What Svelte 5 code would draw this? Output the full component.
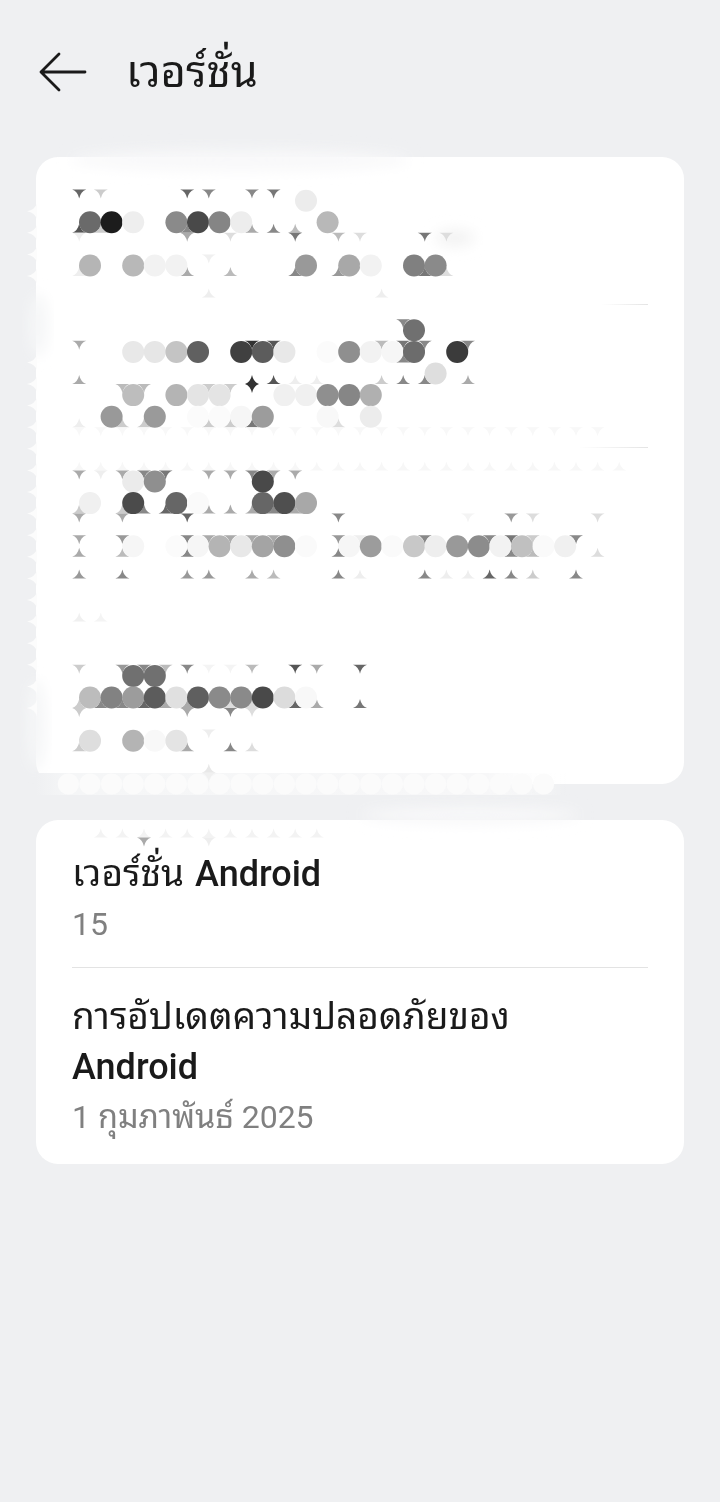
<script>
	// blurred-out block of the first card: grid of dots and the little corners between them
	const step = 21.6;
	const cx = (k) => 68.4 + step * k;
	const cy = (n) => 200.7 + step * n;
	const mx = (m) => 79.2 + step * m;
	const my = (j) => 189.6 + step * j;

	const dotRows = [
		[0, [[11, "ececec"]]],
		[1, [[1, "6a6a6a"], [2, "1f1f1f"], [3, "eeeeee"], [5, "8a8a8a"], [6, "4a4a4a"], [7, "858585"], [8, "ededed"], [12, "b8b8b8"]]],
		[3, [[1, "b5b5b5"], [3, "b8b8b8"], [4, "f2f2f2"], [5, "f2f2f2"], [11, "999999"], [13, "a8a8a8"], [14, "f2f2f2"], [16, "808080"], [17, "8a8a8a"]]],
		[6, [[16, "707070"]]],
		[7, [[3, "e8e8e8"], [4, "e6e6e6"], [5, "c4c4c4"], [6, "606060"], [8, "404040"], [9, "5c5c5c"], [10, "e8e8e8"], [12, "fbfbfb"], [13, "8f8f8f"], [14, "f2f2f2"], [15, "f6f6f6"], [16, "6c6c6c"], [18, "3a3a3a"]]],
		[8, [[17, "dedede"]]],
		[9, [[3, "bdbdbd"], [5, "b4b4b4"], [6, "e4e4e4"], [7, "e4e4e4"], [10, "f0f0f0"], [11, "f0f0f0"], [12, "8f8f8f"], [13, "868686"], [14, "b0b0b0"]]],
		[10, [[2, "999999"], [4, "9a9a9a"], [6, "fbfbfb"], [7, "fbfbfb"], [8, "f6f6f6"], [9, "9c9c9c"], [12, "f8f8f8"], [14, "ececec"]]],
		[13, [[3, "ebebeb"], [4, "8f8f8f"], [9, "4a4a4a"]]],
		[14, [[1, "f0f0f0"], [3, "4c4c4c"], [5, "666666"], [6, "fafafa"], [9, "666666"], [10, "505050"], [11, "a8a8a8"]]],
		[16, [[3, "f6f6f6"], [5, "fbfbfb"], [6, "f6f6f6"], [7, "b4b4b4"], [8, "e8e8e8"], [9, "a4a4a4"], [10, "8f8f8f"], [11, "fafafa"], [13, "f6f6f6"], [14, "9c9c9c"], [15, "fafafa"], [16, "c8c8c8"], [17, "eeeeee"], [18, "999999"], [19, "8c8c8c"], [20, "f2f2f2"], [21, "c0c0c0"], [22, "fafafa"], [23, "f0f0f0"]]],
		[22, [[3, "707070"], [4, "707070"]]],
		[23, [[1, "bcbcbc"], [2, "828282"], [3, "9c9c9c"], [4, "5c5c5c"], [5, "e0e0e0"], [6, "5e5e5e"], [7, "8a8a8a"], [8, "8a8a8a"], [9, "4a4a4a"], [10, "dcdcdc"], [11, "f8f8f8"]]],
		[25, [[1, "dedede"], [3, "b4b4b4"], [4, "f8f8f8"], [5, "e4e4e4"]]],
	];

	const faint = (from, to, grey) =>
		Array.from({ length: to - from + 1 }, (_, i) => [from + i, grey]);

	// [row line, 1 = points down / -1 = points up, [[column, grey]]]
	const cornerRows = [
		[0, 1, [[0, "666666"], [1, "cccccc"], [5, "666666"], [6, "888888"], [8, "888888"], [9, "777777"]]],
		[2, -1, [[0, "555555"], [1, "cccccc"], [5, "888888"], [8, "aaaaaa"], [9, "888888"], [10, "bbbbbb"]]],
		[2, 1, [[0, "eeeeee"], [5, "aaaaaa"], [7, "dddddd"], [10, "777777"], [12, "bbbbbb"], [13, "dddddd"], [16, "777777"], [17, "dddddd"]]],
		[3, 1, [[6, "f0f0f0"]]],
		[4, -1, [[0, "eeeeee"], [5, "aaaaaa"], [7, "bbbbbb"], [10, "888888"], [12, "999999"], [16, "777777"], [17, "dddddd"]]],
		[5, -1, [[6, "eeeeee"], [14, "eeeeee"]]],
		[6, 1, [[15, "888888"]]],
		[7, 1, [[0, "aaaaaa"], [8, "333333"], [9, "555555"], [14, "bbbbbb"], [15, "777777"], [16, "888888"], [18, "888888"]]],
		[8, -1, [[15, "888888"]]],
		[9, -1, [[0, "aaaaaa"], [8, "333333"], [9, "555555"], [10, "eeeeee"], [11, "eeeeee"], [14, "cccccc"], [15, "888888"], [16, "888888"], [18, "aaaaaa"]]],
		[9, 1, [[2, "bbbbbb"], [3, "bbbbbb"], [6, "cccccc"], [7, "cccccc"], [8, "333333"]]],
		[11, -1, [[0, "eeeeee"], [2, "cccccc"], [3, "cccccc"], [6, "cccccc"], [7, "cccccc"], [8, "777777"], [12, "dddddd"]]],
		[11, 1, faint(0, 24, "f8f8f8")],
		[13, -1, faint(0, 25, "f7f7f7")],
		[13, 1, [[0, "aaaaaa"], [1, "eeeeee"], [2, "aaaaaa"], [3, "888888"], [4, "777777"], [6, "aaaaaa"], [7, "aaaaaa"], [8, "888888"], [9, "aaaaaa"], [10, "aaaaaa"]]],
		[15, -1, [[0, "cccccc"], [2, "cccccc"], [3, "888888"], [4, "666666"], [6, "aaaaaa"], [7, "aaaaaa"], [8, "aaaaaa"], [9, "888888"], [10, "aaaaaa"]]],
		[15, 1, [[0, "aaaaaa"], [2, "aaaaaa"], [5, "666666"], [12, "888888"], [18, "f4f4f4"], [20, "999999"], [21, "dddddd"], [24, "dddddd"]]],
		[16, 1, [[0, "aaaaaa"], [2, "999999"], [5, "888888"], [6, "aaaaaa"], [7, "aaaaaa"], [8, "aaaaaa"], [9, "aaaaaa"], [12, "999999"], [13, "eeeeee"], [16, "888888"], [19, "888888"], [20, "777777"], [21, "cccccc"], [23, "888888"]]],
		[17, -1, [[0, "aaaaaa"], [2, "bbbbbb"], [5, "888888"], [12, "888888"], [20, "888888"], [21, "bbbbbb"], [24, "dddddd"]]],
		[18, -1, [[0, "999999"], [2, "888888"], [5, "999999"], [6, "999999"], [8, "aaaaaa"], [9, "bbbbbb"], [12, "888888"], [13, "eeeeee"], [16, "888888"], [17, "eeeeee"], [18, "eeeeee"], [19, "666666"], [20, "888888"], [21, "cccccc"], [23, "888888"]]],
		[20, -1, [[0, "f0f0f0"], [1, "f4f4f4"]]],
		[22, 1, [[0, "cccccc"], [2, "999999"], [3, "888888"], [4, "bbbbbb"], [5, "888888"], [6, "f4f4f4"], [7, "f4f4f4"], [8, "bbbbbb"], [10, "555555"], [11, "aaaaaa"], [13, "666666"]]],
		[24, -1, [[0, "cccccc"], [1, "888888"], [2, "888888"], [3, "666666"], [4, "aaaaaa"], [5, "aaaaaa"], [7, "dddddd"], [8, "dddddd"], [10, "666666"], [11, "aaaaaa"], [13, "777777"]]],
		[24, 1, [[0, "cccccc"], [5, "aaaaaa"], [7, "888888"], [8, "dddddd"]]],
		[25, 1, [[6, "eeeeee"]]],
		[26, -1, [[0, "cccccc"], [5, "aaaaaa"], [7, "888888"], [8, "dddddd"]]],
		[27, -1, [[6, "e8e8e8"]]],
		[27, 1, [[6, "f0f0f0"]]],
		[30, -1, faint(1, 11, "f3f3f3")],
		[30, 1, [[3, "aaaaaa"], [6, "eeeeee"]]],
	];

	const stripDots = Array.from({ length: 23 }, (_, i) => i);
	const edgeRows = [1, 2, 3, 4, 8, 9, 10, 11, 12, 13, 14, 15, 16, 17, 18, 19, 20, 21, 22, 23, 24];

	function corner(x, y, dir) {
		const tip = y + dir * 9;
		const bow = y + dir * 2;
		return `M${x - 7} ${y}Q${x - 1.5} ${bow} ${x} ${tip}Q${x + 1.5} ${bow} ${x + 7} ${y}Z`;
	}

	function spike(x, y) {
		return `M${x + 1} ${y - 8}Q${x - 1} ${y - 1.5} ${x - 9} ${y}Q${x - 1} ${y + 1.5} ${x + 1} ${y + 8}Z`;
	}
</script>

<div class="page">
	<header>
		<svg class="back" width="48" height="40" viewBox="0 0 48 40">
			<path d="M46 20H2M20 2 2 20l18 18" />
		</svg>
		<h1>เวอร์ชั่น</h1>
	</header>

	<section class="card first">
		<div class="slot one"></div>
		<div class="slot two"></div>
		<div class="slot three"></div>
	</section>

	<section class="card">
		<div class="item">
			<div class="label"><span class="th">เวอร์ชั่น</span> <b>Android</b></div>
			<div class="value">15</div>
		</div>
		<div class="item">
			<div class="label"><span class="th">การอัปเดตความปลอดภัยของ</span><br /><b>Android</b></div>
			<div class="value">1 <span class="th">กุมภาพันธ์</span> 2025</div>
		</div>
	</section>

	<svg class="smear" width="720" height="1502" viewBox="0 0 720 1502">
		<defs>
			<filter id="soft" x="-30%" y="-100%" width="160%" height="300%">
				<feGaussianBlur stdDeviation="7" />
			</filter>
			<filter id="grain" x="0" y="0" width="100%" height="100%">
				<feGaussianBlur stdDeviation="0.5" />
			</filter>
			<linearGradient id="strip" x1="0" x2="1" y1="0" y2="0">
				<stop offset="0" stop-color="#eff0f2" />
				<stop offset="0.06" stop-color="#f5f6f7" />
				<stop offset="0.85" stop-color="#f7f7f8" />
				<stop offset="1" stop-color="#ffffff" stop-opacity="0" />
			</linearGradient>
		</defs>

		<!-- soft patches round the edges -->
		<ellipse cx="240" cy="160" rx="170" ry="11" fill="#f8f8f9" filter="url(#soft)" />
		<ellipse cx="38" cy="325" rx="10" ry="32" fill="#f5f6f7" filter="url(#soft)" />
		<ellipse cx="36" cy="725" rx="10" ry="46" fill="#f5f6f7" filter="url(#soft)" />
		<ellipse cx="455" cy="238" rx="20" ry="8" fill="#f2f2f2" filter="url(#soft)" />
		<ellipse cx="470" cy="815" rx="110" ry="9" fill="#f8f8f9" filter="url(#soft)" />

		{#each edgeRows as j}
			<path d={spike(36, my(j))} fill="#fcfcfc" />
		{/each}

		<rect x="36" y="773" width="530" height="22" fill="url(#strip)" />
		{#each stripDots as k}
			<circle cx={cx(k)} cy="784" r="10.6" fill="#fbfbfb" />
		{/each}

		<g filter="url(#grain)">
			{#each cornerRows as [j, dir, list]}
				{#each list as [m, grey]}
					<path d={corner(mx(m), my(j), dir)} fill={"#" + grey} />
				{/each}
			{/each}

			{#each dotRows as [n, list]}
				{#each list as [k, grey]}
					<circle cx={cx(k)} cy={cy(n)} r="11" fill={"#" + grey} />
				{/each}
			{/each}
		</g>
	</svg>
</div>

<style>
	:global(body) {
		background: #eff0f2;
	}

	.page {
		position: relative;
		height: 1502px;
		overflow: hidden;
		background: #eff0f2;
		font-family: Roboto, "Noto Sans Thai Looped", "Noto Sans Thai", "Noto Sans", sans-serif;
		color: #1a1a1a;
	}

	header {
		display: flex;
		align-items: center;
		height: 144px;
		margin-bottom: 13px;
		padding-left: 39px;
	}

	.back {
		margin-right: 39px;
	}

	.back path {
		fill: none;
		stroke: #1a1a1a;
		stroke-width: 2.8;
		stroke-linecap: round;
		stroke-linejoin: round;
	}

	h1 {
		margin: 0 0 10px;
		font-size: 43.5px;
		font-weight: 375;
		will-change: transform;
	}

	.card {
		margin: 0 36px 36px;
		padding: 0 36px;
		background: #fff;
		border-radius: 22px;
	}

	.first {
		height: 627px;
	}

	.slot {
		height: 143px;
	}

	.slot.one {
		height: 148px;
		background: linear-gradient(90deg, transparent 92%, #e4e4e4 100%) bottom / 100% 1px no-repeat;
	}

	.slot.two {
		background: linear-gradient(90deg, transparent 88%, #e4e4e4 100%) bottom / 100% 1px no-repeat;
	}

	.item {
		padding: 29px 0 18px;
	}

	.item + .item {
		padding: 24px 0 22px;
		border-top: 1px solid #e3e3e3;
	}

	.label {
		font-size: 36px;
		line-height: 50px;
		word-spacing: 2px;
		will-change: transform;
	}

	.label .th {
		font-size: 37px;
		font-weight: 375;
	}

	.label b {
		font-weight: 500;
	}

	.value {
		font-size: 32px;
		font-weight: 400;
		line-height: 50px;
		color: #808080;
		will-change: transform;
	}

	.value .th {
		font-size: 32.5px;
		font-weight: 375;
	}

	.smear {
		position: absolute;
		top: 0;
		left: 0;
		pointer-events: none;
	}
</style>
